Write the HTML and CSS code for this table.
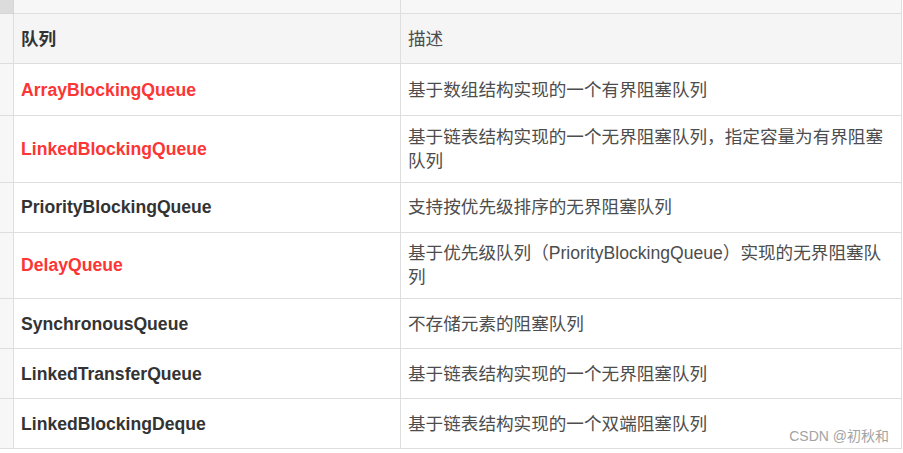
FILE: index.html
```html
<!DOCTYPE html>
<html lang="zh-CN">
<head>
<meta charset="utf-8">
<title>阻塞队列</title>
<link rel="stylesheet" href="styles.css">
</head>
<body>
<div class="sheet">
  <div class="row band">
    <div class="cell gutter grip"><span></span><span></span><span></span><span></span></div>
    <div class="cell"></div>
    <div class="cell"></div>
  </div>
  <div class="row head">
    <div class="cell gutter"></div>
    <div class="cell name">队列</div>
    <div class="cell desc">描述</div>
  </div>
  <div class="row tall">
    <div class="cell gutter"></div>
    <div class="cell name red">ArrayBlockingQueue</div>
    <div class="cell desc">基于数组结构实现的一个有界阻塞队列</div>
  </div>
  <div class="row">
    <div class="cell gutter"></div>
    <div class="cell name red">LinkedBlockingQueue</div>
    <div class="cell desc">基于链表结构实现的一个无界阻塞队列，指定容量为有界阻塞队列</div>
  </div>
  <div class="row">
    <div class="cell gutter"></div>
    <div class="cell name">PriorityBlockingQueue</div>
    <div class="cell desc">支持按优先级排序的无界阻塞队列</div>
  </div>
  <div class="row">
    <div class="cell gutter"></div>
    <div class="cell name red">DelayQueue</div>
    <div class="cell desc">基于优先级队列（PriorityBlockingQueue）实现的无界阻塞队列</div>
  </div>
  <div class="row">
    <div class="cell gutter"></div>
    <div class="cell name">SynchronousQueue</div>
    <div class="cell desc">不存储元素的阻塞队列</div>
  </div>
  <div class="row">
    <div class="cell gutter"></div>
    <div class="cell name">LinkedTransferQueue</div>
    <div class="cell desc">基于链表结构实现的一个无界阻塞队列</div>
  </div>
  <div class="row">
    <div class="cell gutter"></div>
    <div class="cell name">LinkedBlockingDeque</div>
    <div class="cell desc">基于链表结构实现的一个双端阻塞队列</div>
  </div>
  <div class="watermark">CSDN @初秋和</div>
</div>
</body>
</html>
```

FILE: styles.css
```css
html, body {
  margin: 0;
  padding: 0;
  background: #ffffff;
}

.sheet {
  position: relative;
  width: 902px;
  font-family: "Liberation Sans", "Noto Sans CJK SC", sans-serif;
  font-size: 17.6px;
  line-height: 24px;
}

.row {
  display: grid;
  grid-template-columns: 14px 387px 501px;
  min-height: 50px;
}

.row.tall {
  min-height: 52px;
}

.cell {
  box-sizing: border-box;
  border-right: 1px solid #dedede;
  border-bottom: 1px solid #dedede;
  padding: 8.75px 7px;
  display: flex;
  align-items: center;
}

.gutter {
  background: #f7f7f7;
  padding: 0;
}

.band {
  min-height: 14px;
}

.band .cell {
  background: #f7f7f7;
  padding: 0;
  height: 14px;
}

.band .grip {
  background: #dcdcdc;
  border-color: #d6d6d6;
  display: grid;
  grid-template-columns: 3px 3px;
  grid-template-rows: 3px 3px;
  gap: 1px;
  align-content: center;
  justify-content: center;
}

.grip span {
  background: #ffffff;
}

.head .cell {
  background: #f5f5f5;
}

.name {
  font-weight: bold;
  color: #333333;
}

.name.red {
  color: #fc3535;
}

.desc {
  color: #4d4d4d;
  font-weight: normal;
}

.watermark {
  position: absolute;
  right: 13px;
  top: 427px;
  font-size: 14px;
  line-height: 18px;
  color: #a3a3a3;
}
```
